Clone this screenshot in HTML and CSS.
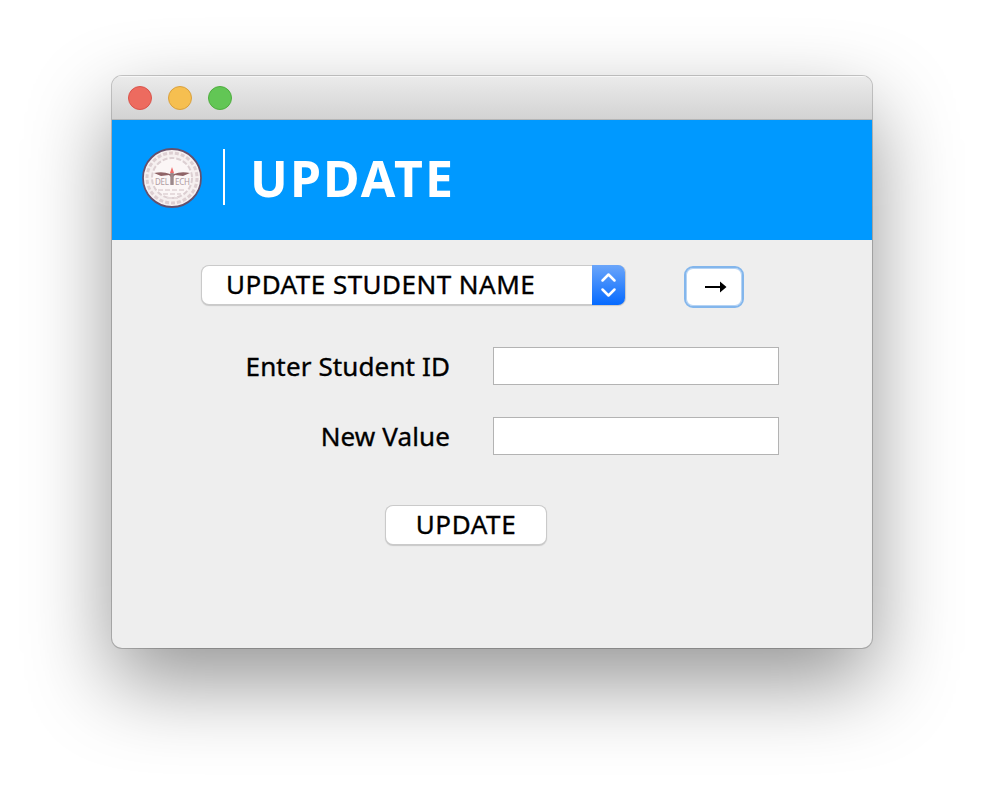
FILE: index.html
```html
<!DOCTYPE html>
<html lang="en">
<head>
<meta charset="utf-8">
<title>Update</title>
<link rel="stylesheet" href="styles.css">
</head>
<body>
<main class="window">
  <div class="titlebar"><i class="light red"></i><i class="light yellow"></i><i class="light green"></i></div>
  <header class="banner">
    <svg class="seal" viewBox="0 0 60 60" aria-hidden="true">
      <circle cx="30" cy="30" r="29" fill="#f6f0f0" stroke="#65506c" stroke-width="1.8"/>
      <circle cx="30" cy="30" r="25" fill="none" stroke="#ddcfd2" stroke-width="3" stroke-dasharray="4 2"/>
      <circle cx="30" cy="30" r="20" fill="#fbf6f6" stroke="#dccfd2" stroke-width="2" stroke-dasharray="5 2"/>
      <path d="M12 25Q21 23 28 26L32 26Q39 23 48 25L41 28 33 27 30 30 27 27 19 28Z" fill="#8f6467"/>
      <path d="M30 25V37" stroke="#9b888b" stroke-width="3.4"/>
      <path d="M30 19L32 25H28Z" fill="#ee6c6c"/>
      <text class="seal-text" x="13" y="36.500" textLength="14">DEL</text>
      <text class="seal-text" x="33" y="36.500" textLength="15">ECH</text>
      <path d="M16 42H44M21 46H39M25 50H36" stroke="#e6dbdd" stroke-width="2" stroke-dasharray="5 2"/>
    </svg>
    <span class="divider"></span>
    <h1 class="title">UPDATE</h1>
  </header>
  <form class="form">
    <div class="picker-row">
      <div class="select"><span class="select-text">UPDATE STUDENT NAME</span>
        <span class="stepper"><svg width="33" height="40" viewBox="0 0 33 40"><path d="M10.500 15.500L16.500 9.500 22.500 15.500M10.500 24.500L16.500 30.500 22.500 24.500" fill="none" stroke="#fff" stroke-width="2.500" stroke-linecap="round" stroke-linejoin="round"/></svg></span>
      </div>
      <button type="button" class="go" aria-label="Go"><svg width="22" height="12" viewBox="0 0 22 12"><path d="M0 5H15V.5L21.500 6 15 11.500V7H0Z"/></svg></button>
    </div>
    <div class="field"><label class="label" for="sid">Enter Student ID</label><input class="input" id="sid"></div>
    <div class="field"><label class="label" for="val">New Value</label><input class="input" id="val"></div>
    <button type="button" class="update">UPDATE</button>
  </form>
</main>
</body>
</html>
```
FILE: styles.css
```css
* { box-sizing: border-box; }
body {
  margin: 0;
  height: 796px;
  padding: 76px 112px 0;
  background: #fff;
  overflow: hidden;
  color: #000;
  font: 26px/38px "Noto Sans", "Open Sans", sans-serif;
  -webkit-text-stroke: .35px #000;
}
.window {
  width: 760px;
  height: 572px;
  border-radius: 10px;
  overflow: hidden;
  background: #eee;
  box-shadow: 0 0 0 1px rgba(0,0,0,.2), 0 34px 84px rgba(0,0,0,.42);
}
.titlebar {
  height: 44px;
  display: flex;
  align-items: center;
  gap: 16px;
  padding-left: 16px;
  background: linear-gradient(#ebebeb, #d3d3d3);
  border-bottom: 1px solid #b5b5b5;
  box-shadow: inset 0 1px #f7f7f7;
}
.light { width: 24px; height: 24px; border-radius: 50%; border: 1px solid; }
.red { background: #ed6b5f; border-color: #d9544c; }
.yellow { background: #f6bf50; border-color: #d9a03e; }
.green { background: #62c655; border-color: #4fad3f; }
.banner {
  height: 120px;
  display: flex;
  background: #0099ff;
  padding: 28px 30px;
}
.seal { width: 60px; height: 60px; }
.seal-text { font-size: 8px; fill: #ae9ca2; -webkit-text-stroke: 0; }
.divider { width: 2px; height: 56px; margin: 1px 0 0 21px; background: #fff; }
.title {
  margin: 0 0 0 25px;
  color: #fff;
  font-size: 50px;
  font-weight: 700;
  line-height: 60px;
  letter-spacing: 2.1px;
  -webkit-text-stroke: 0;
}
.form { padding-top: 26px; }
.picker-row { display: flex; padding-left: 90px; height: 81px; }
.select {
  display: flex;
  width: 423px;
  height: 38px;
  border-radius: 7px;
  background: #fff;
  box-shadow: 0 0 0 1px #cacaca, 0 1px 1px 1px rgba(0,0,0,.16);
}
.select-text { flex: 1; padding-left: 24px; white-space: nowrap; line-height: 36px; letter-spacing: .47px; }
.stepper {
  width: 33px;
  height: 40px;
  margin-top: -1px;
  border-radius: 0 7px 7px 0;
  background: linear-gradient(#6ba6fa, #056aff);
}
.stepper svg { display: block; }
.go {
  display: flex;
  align-items: center;
  justify-content: center;
  width: 60px;
  height: 42px;
  margin: 0 0 0 59px;
  padding: 0 0 0 3px;
  border: 2px solid #83b6ec;
  border-radius: 9px;
  background: #fff;
  box-shadow: inset 0 0 0 1px #b5d3f4;
}
.field { display: flex; height: 70px; }
.label { width: 338px; text-align: right; white-space: nowrap; line-height: 39px; letter-spacing: .12px; }
.input {
  width: 286px;
  height: 38px;
  margin-left: 43px;
  border: 1px solid #b3b3b3;
  background: #fff;
}
.update {
  display: block;
  width: 160px;
  height: 38px;
  margin: 19px 0 0 274px;
  padding: 0 0 2px;
  border: 0;
  border-radius: 7px;
  background: #fff;
  box-shadow: 0 0 0 1px #cacaca, 0 1px 1px 1px rgba(0,0,0,.16);
  color: #000;
  font: inherit;
  line-height: 36px;
  letter-spacing: .6px;
  -webkit-text-stroke: .35px #000;
}
```
